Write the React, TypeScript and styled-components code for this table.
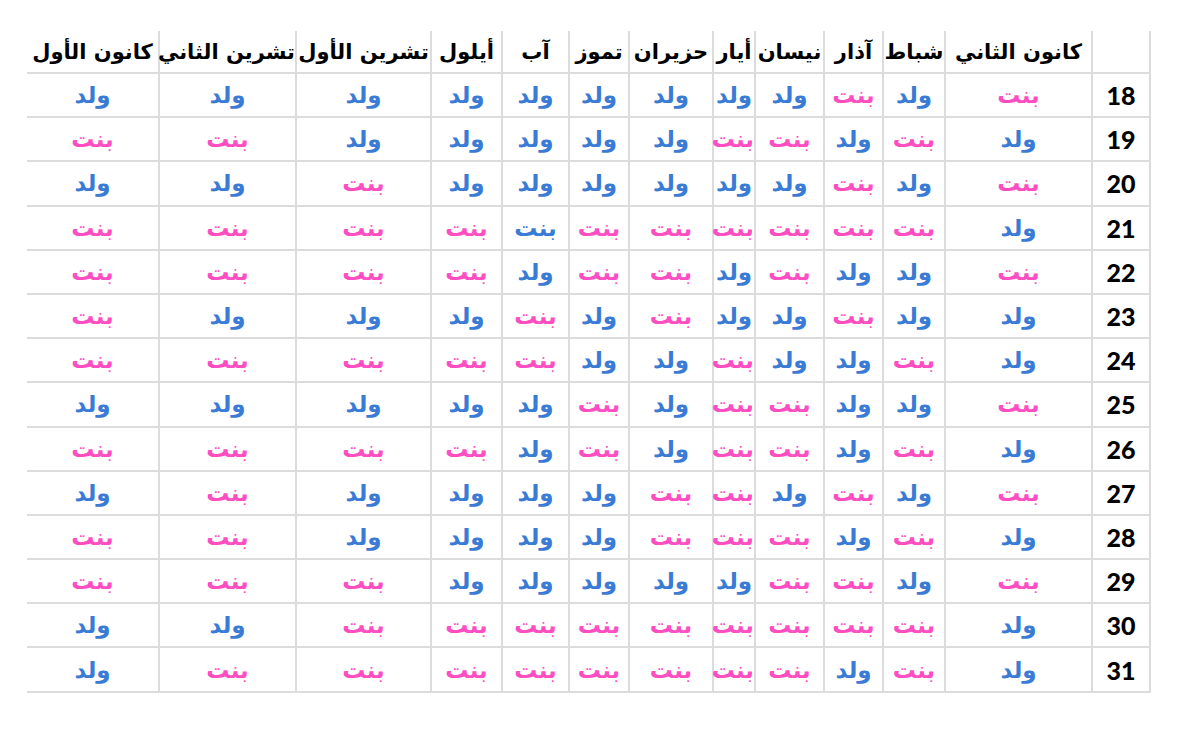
import styled, { createGlobalStyle } from 'styled-components';

const GlobalStyle = createGlobalStyle`
  html, body {
    margin: 0;
    padding: 0;
    background: #ffffff;
  }
`;

const Page = styled.div`
  padding: 31px 0 0 27px;
  width: 1200px;
  height: 743px;
  box-sizing: border-box;
  background: #ffffff;
`;

const Table = styled.table`
  direction: rtl;
  table-layout: fixed;
  border-collapse: collapse;
  width: 1124px;
`;

const HeadCell = styled.th<{ $w: number }>`
  width: ${(p) => p.$w - 2}px;
  height: 41px;
  padding: 0;
  border-right: 2px solid #dcdcdc;
  border-bottom: 2px solid #dcdcdc;
  font-family: "DejaVu Sans", sans-serif;
  font-weight: bold;
  font-size: 21px;
  letter-spacing: -0.3px;
  color: #000000;
  white-space: nowrap;
  text-align: center;
  vertical-align: middle;
  overflow: visible;
`;

const Row = styled.tr`
  height: 44.2px;
`;

const NumCell = styled.td`
  padding: 0;
  border-right: 2px solid #dcdcdc;
  border-bottom: 2px solid #dcdcdc;
  font-family: Lato, "Open Sans", sans-serif;
  font-weight: 900;
  font-size: 25px;
  color: #000000;
  text-align: center;
  vertical-align: middle;
`;

const ValueCell = styled.td<{ $tone: 'boy' | 'girl' }>`
  padding: 0;
  border-right: 2px solid #dcdcdc;
  border-bottom: 2px solid #dcdcdc;
  font-family: "DejaVu Sans", sans-serif;
  font-weight: bold;
  font-size: 23px;
  color: ${(p) => (p.$tone === 'boy' ? '#3a7bd5' : '#ff4ec2')};
  text-align: center;
  vertical-align: middle;
  white-space: nowrap;
`;

const columns: { name: string; w: number }[] = [
  { name: '', w: 58 },
  { name: 'كانون الثاني', w: 147 },
  { name: 'شباط', w: 62 },
  { name: 'آذار', w: 59 },
  { name: 'نيسان', w: 69 },
  { name: 'أيار', w: 42 },
  { name: 'حزيران', w: 84 },
  { name: 'تموز', w: 60 },
  { name: 'آب', w: 67 },
  { name: 'أيلول', w: 71 },
  { name: 'تشرين الأول', w: 135 },
  { name: 'تشرين الثاني', w: 137 },
  { name: 'كانون الأول', w: 133 },
];

// b = ولد, g = بنت, x = بنت written in blue (as in the source chart)
const rows: [number, string][] = [
  [18, 'gbgbbbbbbbbb'],
  [19, 'bgbggbbbbbgg'],
  [20, 'gbgbbbbbbgbb'],
  [21, 'bggggggxgggg'],
  [22, 'gbbgbggbgggg'],
  [23, 'bbgbbgbgbbbg'],
  [24, 'bgbbgbbggggg'],
  [25, 'gbbggbgbbbbb'],
  [26, 'bgbggbgbgggg'],
  [27, 'gbgbggbbbbgb'],
  [28, 'bgbgggbbbbgg'],
  [29, 'gbggbbbbbggg'],
  [30, 'bgggggggggbb'],
  [31, 'bgbggggggggb'],
];

export default function App() {
  return (
    <Page>
      <GlobalStyle />
      <Table>
        <thead>
          <tr>
            {columns.map((c, i) => (
              <HeadCell key={i} $w={c.w}>
                {c.name}
              </HeadCell>
            ))}
          </tr>
        </thead>
        <tbody>
          {rows.map(([day, cells]) => (
            <Row key={day}>
              <NumCell>{day}</NumCell>
              {cells.split('').map((ch, i) => (
                <ValueCell key={i} $tone={ch === 'g' ? 'girl' : 'boy'}>
                  {ch === 'b' ? 'ولد' : 'بنت'}
                </ValueCell>
              ))}
            </Row>
          ))}
        </tbody>
      </Table>
    </Page>
  );
}
